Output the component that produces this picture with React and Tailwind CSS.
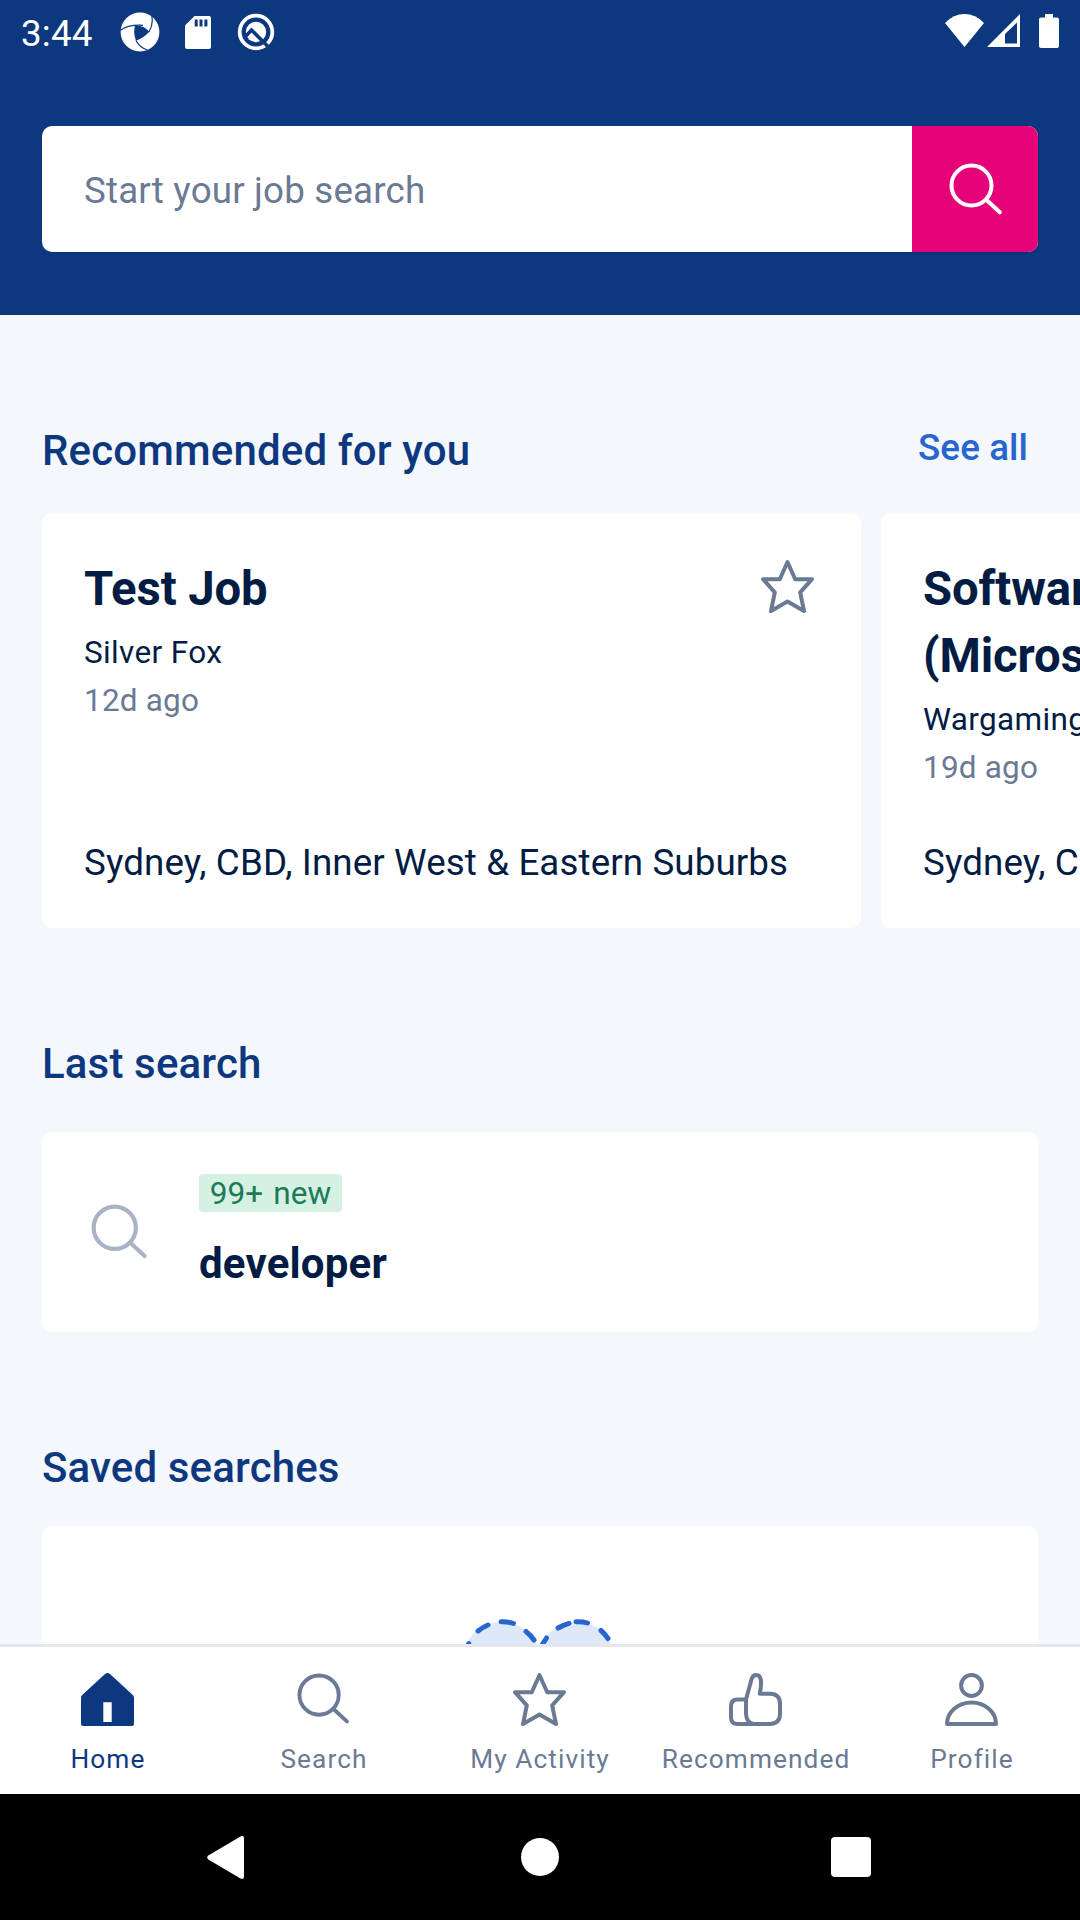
function SearchIcon({ className, stroke = 4 }) {
  return (
    <svg viewBox="0 0 54 54" className={className} fill="none" stroke="currentColor" strokeWidth={stroke} strokeLinecap="round">
      <circle cx="22.5" cy="22.5" r="20" />
      <path d="M37 36.5 50.8 49.3" />
    </svg>
  );
}

function StarIcon({ className }) {
  return (
    <svg viewBox="0 0 53 53" className={className} fill="none" stroke="currentColor" strokeWidth="4" strokeLinejoin="round">
      <path d="M26.5 2 34.2 19.2H51L39.2 32.3 43 51 26.5 41.5 10 51 13.8 32.3 2 19.2H18.8Z" />
    </svg>
  );
}

function HomeIcon({ className }) {
  return (
    <svg viewBox="0 0 53 53" className={className} fill="currentColor">
      <path fillRule="evenodd" d="M24 1.1Q26.5-1 29 1.1L51.8 22Q53 23.2 53 24.8V51Q53 53 51 53H2Q0 53 0 51V24.8Q0 23.2 1.2 22ZM22.3 29.2V49H30.7V29.2Z" />
    </svg>
  );
}

function ThumbIcon({ className }) {
  return (
    <svg viewBox="0 0 53 53" className={className} fill="none" stroke="currentColor" strokeWidth="4" strokeLinejoin="round">
      <path d="M17 26.5H8.5Q2 26.5 2 33V44.5Q2 51 8.5 51H41Q51 50.5 51 41V30.5Q51 21 41 20.7H30.7Q32.3 14.5 32 8.5 31.5 2 27.3 2 23.8 2 22.6 6L17 26.5V41Q17.5 50 25 51" />
    </svg>
  );
}

function ProfileIcon({ className }) {
  return (
    <svg viewBox="0 0 53 53" className={className} fill="none" stroke="currentColor" strokeWidth="4" strokeLinejoin="round">
      <circle cx="26.5" cy="12.5" r="10.4" />
      <path d="M2 51A24.5 21.5 0 0 1 51 51Z" />
    </svg>
  );
}

function PinwheelIcon() {
  return (
    <svg viewBox="0 0 40 40" className="h-10 w-10" fill="none">
      <circle cx="20" cy="20" r="19.4" fill="#fff" />
      <path d="M15 13.5Q23 12.5 29.3 19.7 23.5 26 16 28.8 13 21 15 13.5Z" fill="#0d3880" />
      <path d="M0 18.5Q8 12.5 23 13.3M31.8 4Q33.5 12 29 20M16 28.5Q19.5 35.5 27.5 38" stroke="#0d3880" strokeWidth="1.2" />
    </svg>
  );
}

function SdCardIcon() {
  return (
    <svg viewBox="0 0 26 33" className="h-[33px] w-[26px]">
      <path fillRule="evenodd" fill="#fff" d="M9.5 0H24Q26 0 26 2V31Q26 33 24 33H2Q0 33 0 31V9.5ZM9.7 3.5V10.5H12.7V3.5ZM14.5 3.5V10.5H17.5V3.5ZM19.4 3.5V10.5H22.4V3.5Z" />
    </svg>
  );
}

function QIcon() {
  return (
    <svg viewBox="0 0 38 38" className="h-[38px] w-[38px]" fill="none">
      <circle cx="19" cy="19" r="16.3" stroke="#fff" strokeWidth="3.8" />
      <circle cx="19" cy="19" r="10.2" fill="#fff" />
      <path d="M8 24 14.5 17 31.5 34" stroke="#0d3880" strokeWidth="3.6" />
    </svg>
  );
}

function StatusBar() {
  return (
    <div className="flex h-[63px] items-start justify-between px-[21px] text-white">
      <div className="flex items-center pt-[11px]">
        <span className="w-[99px] pt-0.5 -mb-0.5 text-[36.75px] leading-[42px] tracking-[0.2px] whitespace-nowrap">3:44</span>
        <PinwheelIcon />
        <span className="w-[25px]" />
        <SdCardIcon />
        <span className="w-[26px]" />
        <QIcon />
      </div>
      <div className="flex items-start pt-[14px]">
        <svg viewBox="0 0 39 33" className="h-[33px] w-[39px]" fill="#fff">
          <path d="M0 9Q8.5 0 19.5 0T39 9L19.5 33Z" />
        </svg>
        <svg viewBox="0 0 33 33" className="ml-[3px] h-[33px] w-[33px]" fill="#fff">
          <path fillRule="evenodd" d="M33 0V33H0ZM30 8.5 18 20V29.5H30Z" />
        </svg>
        <svg viewBox="0 0 20 34" className="ml-[19px] h-[34px] w-[20px]" fill="#fff">
          <path d="M6 0H14V3.5H18Q20 3.5 20 5.5V32Q20 34 18 34H2Q0 34 0 32V5.5Q0 3.5 2 3.5H6Z" />
        </svg>
      </div>
    </div>
  );
}

function JobCard({ title, company, age, location }) {
  return (
    <article className="flex h-[415px] w-[819px] shrink-0 flex-col rounded-[10px] bg-white px-[42px] pt-[43px] pb-[41px] text-[#021c44]">
      <div className="flex items-start justify-between">
        <h3 className="text-[47.25px] leading-[67px] font-bold tracking-[-0.1px] whitespace-pre-line">{title}</h3>
        <StarIcon className="mt-1 mr-[5px] h-[53px] w-[53px] shrink-0 text-[#6b7a94]" />
      </div>
      <p className="mt-1.5 text-[31.5px] leading-[48px] tracking-[0.35px]">{company}</p>
      <p className="text-[31.5px] leading-[48px] tracking-[0.2px] text-[#6b7a94]">{age}</p>
      <p className="mt-auto text-[36.75px] leading-[48px] tracking-[0.1px] whitespace-nowrap">{location}</p>
    </article>
  );
}

function SectionTitle({ children }) {
  return <h2 className="text-[42px] leading-[57px] font-medium tracking-[0.15px] text-[#0d3880]">{children}</h2>;
}

const jobs = [
  { title: "Test Job", company: "Silver Fox", age: "12d ago", location: "Sydney, CBD, Inner West & Eastern Suburbs" },
  { title: "Software Engineer\n(Microservices)", company: "Wargaming", age: "19d ago", location: "Sydney, CBD, Inner West & Eastern Suburbs" },
];

const tabs = [
  { label: "Home", Icon: HomeIcon, active: true },
  { label: "Search", Icon: SearchIcon },
  { label: "My Activity", Icon: StarIcon },
  { label: "Recommended", Icon: ThumbIcon },
  { label: "Profile", Icon: ProfileIcon },
];

export default function App() {
  return (
    <div className="flex h-[1920px] w-[1080px] flex-col overflow-hidden bg-[#f4f7fc] font-['Roboto',sans-serif]">
      <header className="h-[315px] shrink-0 bg-[#0d3880]">
        <StatusBar />
        <div className="mx-[42px] mt-[63px] flex h-[126px] overflow-hidden rounded-[10px] bg-white shadow-sm">
          <div className="flex flex-1 items-center pt-1 pl-[42px] text-[36.75px] tracking-[0.17px] text-[#6b7a94]">Start your job search</div>
          <button className="flex w-[126px] items-center justify-center bg-[#e60278] pt-px pl-px text-white">
            <SearchIcon className="h-[54px] w-[54px]" />
          </button>
        </div>
      </header>

      <main className="h-[1329px] shrink-0 overflow-hidden pl-[42px]">
        <section className="pt-[107px]">
          <div className="mb-[34px] flex items-start justify-between pr-[52px]">
            <SectionTitle>Recommended for you</SectionTitle>
            <a className="text-[36.75px] leading-[51px] font-medium tracking-[0.1px] text-[#2765cf]">See all</a>
          </div>
          <div className="flex gap-5 overflow-hidden">
            {jobs.map((job) => (
              <JobCard key={job.age} {...job} />
            ))}
          </div>
        </section>

        <section className="pt-[107px] pr-[42px]">
          <SectionTitle>Last search</SectionTitle>
          <div className="mt-10 flex h-[200px] items-start rounded-[10px] bg-white pt-[42px] pl-[49px]">
            <SearchIcon className="mt-[30px] h-[57px] w-[57px] text-[#a9b3c3]" />
            <div className="ml-[51px]">
              <div className="flex h-[38px] w-[143px] items-center justify-center rounded bg-[#d4f1e1] pt-0.5 text-[31.5px] leading-[38px] tracking-[0.1px] [word-spacing:2px] text-[#1c7a59]">99+ new</div>
              <p className="mt-[23px] text-[42px] leading-[57px] font-bold tracking-[0.2px] text-[#021c44]">developer</p>
            </div>
          </div>
        </section>

        <section className="pt-[107px] pr-[42px]">
          <SectionTitle>Saved searches</SectionTitle>
          <div className="mt-[30px] flex h-[300px] justify-center rounded-[10px] bg-white pt-[92px]">
            <svg viewBox="0 0 150 130" className="h-[130px] w-[150px]" fill="none">
              <path d="M2 26Q11 4 37 4 62 5 74 30 87 4 112 4 136 4 146 27 151 60 75 122 -5 60 2 26Z" fill="#dfe8f8" />
              <path d="M3.8 25.5 2 30M13 13Q18 9 23 7M36 3.7Q43 3.5 48.5 5.5M61 13.5Q66 17.5 69 22M81.5 20 77 27M93 10Q98 7 104 5.3M111 3.7Q118 3.5 122.5 5M136 12.5Q140 16 143 20.5" stroke="#2765cf" strokeWidth="5" strokeLinecap="round" />
            </svg>
          </div>
        </section>
      </main>

      <nav className="grid h-[150px] shrink-0 grid-cols-5 border-t-[3px] border-[#e5e7ec] bg-white">
        {tabs.map(({ label, Icon, active }) => (
          <div key={label} className={active ? "flex flex-col items-center pt-[26px] text-[#0d3880]" : "flex flex-col items-center pt-[26px] text-[#6b7a94]"}>
            <Icon className="mr-[1.5px] h-[53px] w-[53px]" />
            <span className="mt-4 text-[26.25px] leading-[34px] tracking-[1.08px] whitespace-nowrap">{label}</span>
          </div>
        ))}
      </nav>

      <div className="flex h-[126px] shrink-0 items-center bg-black pl-[207px]">
        <svg viewBox="0 0 37 43" className="h-[43px] w-[37px]" fill="#fff">
          <path d="M33.5.5Q37-1.2 37 2.5V40.5Q37 44 33.5 42.5L1.3 23.5Q-.8 21.5 1.3 19.5Z" />
        </svg>
        <div className="ml-[277px] h-[38px] w-[38px] rounded-full bg-white" />
        <div className="ml-[272px] h-10 w-10 rounded bg-white" />
      </div>
    </div>
  );
}
